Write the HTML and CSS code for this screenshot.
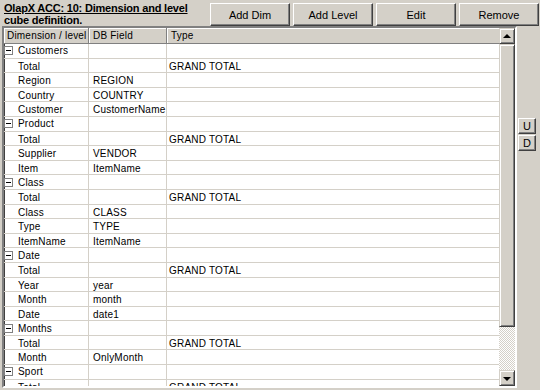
FILE: index.html
```html
<!DOCTYPE html>
<html>
<head>
<meta charset="utf-8">
<link rel="stylesheet" href="styles.css">
</head>
<body>
<div class="app">
  <div class="topbar">
    <div class="title">
      <div class="title-line1">OlapX ACC: 10: Dimension and level</div>
      <div class="title-line2">cube definition.</div>
    </div>
    <div class="buttons">
      <button class="btn">Add Dim</button>
      <button class="btn">Add Level</button>
      <button class="btn">Edit</button>
      <button class="btn">Remove</button>
    </div>
  </div>
  <div class="main">
    <div class="grid">
      <div class="table">
        <div class="row head">
          <div class="hc">Dimension / level</div>
          <div class="hc">DB Field</div>
          <div class="hc">Type</div>
        </div>
        <div class="row"><div class="c c1 grp"><span class="exp"></span>Customers</div><div class="c c2"></div><div class="c c3"></div></div>
        <div class="row"><div class="c c1">Total</div><div class="c c2"></div><div class="c c3">GRAND TOTAL</div></div>
        <div class="row"><div class="c c1">Region</div><div class="c c2">REGION</div><div class="c c3"></div></div>
        <div class="row"><div class="c c1">Country</div><div class="c c2">COUNTRY</div><div class="c c3"></div></div>
        <div class="row"><div class="c c1">Customer</div><div class="c c2">CustomerName</div><div class="c c3"></div></div>
        <div class="row"><div class="c c1 grp"><span class="exp"></span>Product</div><div class="c c2"></div><div class="c c3"></div></div>
        <div class="row"><div class="c c1">Total</div><div class="c c2"></div><div class="c c3">GRAND TOTAL</div></div>
        <div class="row"><div class="c c1">Supplier</div><div class="c c2">VENDOR</div><div class="c c3"></div></div>
        <div class="row"><div class="c c1">Item</div><div class="c c2">ItemName</div><div class="c c3"></div></div>
        <div class="row"><div class="c c1 grp"><span class="exp"></span>Class</div><div class="c c2"></div><div class="c c3"></div></div>
        <div class="row"><div class="c c1">Total</div><div class="c c2"></div><div class="c c3">GRAND TOTAL</div></div>
        <div class="row"><div class="c c1">Class</div><div class="c c2">CLASS</div><div class="c c3"></div></div>
        <div class="row"><div class="c c1">Type</div><div class="c c2">TYPE</div><div class="c c3"></div></div>
        <div class="row"><div class="c c1">ItemName</div><div class="c c2">ItemName</div><div class="c c3"></div></div>
        <div class="row"><div class="c c1 grp"><span class="exp"></span>Date</div><div class="c c2"></div><div class="c c3"></div></div>
        <div class="row"><div class="c c1">Total</div><div class="c c2"></div><div class="c c3">GRAND TOTAL</div></div>
        <div class="row"><div class="c c1">Year</div><div class="c c2">year</div><div class="c c3"></div></div>
        <div class="row"><div class="c c1">Month</div><div class="c c2">month</div><div class="c c3"></div></div>
        <div class="row"><div class="c c1">Date</div><div class="c c2">date1</div><div class="c c3"></div></div>
        <div class="row"><div class="c c1 grp"><span class="exp"></span>Months</div><div class="c c2"></div><div class="c c3"></div></div>
        <div class="row"><div class="c c1">Total</div><div class="c c2"></div><div class="c c3">GRAND TOTAL</div></div>
        <div class="row"><div class="c c1">Month</div><div class="c c2">OnlyMonth</div><div class="c c3"></div></div>
        <div class="row"><div class="c c1 grp"><span class="exp"></span>Sport</div><div class="c c2"></div><div class="c c3"></div></div>
        <div class="row"><div class="c c1">Total</div><div class="c c2"></div><div class="c c3">GRAND TOTAL</div></div>
      </div>
      <div class="scrollbar">
        <div class="sb-btn"><span class="arrow-up"></span></div>
        <div class="sb-thumb"></div>
        <div class="sb-track"></div>
        <div class="sb-btn"><span class="arrow-down"></span></div>
      </div>
    </div>
    <div class="side">
      <button class="small-btn">U</button>
      <button class="small-btn">D</button>
    </div>
  </div>
</div>
</body>
</html>
```

FILE: styles.css
```css
html, body {
  margin: 0;
  padding: 0;
}
body {
  background: #d4d0c8;
  font-family: "Liberation Sans", Arial, sans-serif;
  font-size: 11px;
  color: #000;
  width: 540px;
  height: 390px;
  overflow: hidden;
}
.app {
  display: flex;
  flex-direction: column;
}
.topbar {
  display: flex;
  height: 26px;
}
.title {
  padding: 2px 0 0 4px;
  font-weight: bold;
  line-height: 12px;
  letter-spacing: -0.2px;
}
.title-line1 {
  text-decoration: underline;
}
.buttons {
  margin-left: auto;
  display: flex;
  gap: 3px;
  padding: 3px 1px 0 0;
}
.btn {
  width: 80px;
  height: 23px;
  margin: 0;
  padding: 0;
  font-family: "Liberation Sans", Arial, sans-serif;
  font-size: 11px;
  color: #000;
  background: #d4d0c8;
  border: 1px solid;
  border-color: #ffffff #404040 #404040 #ffffff;
  box-shadow: inset -1px -1px 0 #808080;
}
.main {
  display: flex;
}
.grid {
  margin-left: 2px;
  width: 511px;
  height: 358px;
  border: 2px solid;
  border-color: #808080 #ffffff #ffffff #808080;
  box-shadow: inset 1px 1px 0 #404040;
  display: flex;
  background: #fff;
}
.table {
  flex: 1;
  overflow: hidden;
  padding: 0;
  font-size: 10px;
  letter-spacing: 0.2px;
}
.row {
  display: grid;
  grid-template-columns: 85px 78px 1fr;
  height: 14.6px;
}
.row.head {
  height: 16px;
  background: #d4d0c8;
}
.hc {
  box-sizing: border-box;
  padding: 2px 0 0 3px;
  line-height: 12px;
  border-right: 1px solid #808080;
  border-bottom: 1px solid #808080;
  box-shadow: inset 1px 1px 0 #ffffff;
  white-space: nowrap;
  overflow: hidden;
}
.hc:nth-child(2) { padding-left: 4px; }
.hc:nth-child(3) { padding-left: 4px; border-right: none; }
.c {
  box-sizing: border-box;
  border-right: 1px solid #d4d0c8;
  border-bottom: 1px solid #d4d0c8;
  white-space: nowrap;
  overflow: hidden;
  line-height: 13px;
  padding-top: 1px;
}
.c1 { padding-left: 14px; }
.c1.grp { padding-left: 0; display: flex; align-items: center; padding-top: 0; }
.c2 { padding-left: 4px; }
.c3 { padding-left: 2px; border-right: none; }
.exp {
  box-sizing: border-box;
  width: 9px;
  height: 9px;
  border: 1px solid #808080;
  background: #fff;
  margin-right: 5px;
  position: relative;
  flex: none;
}
.exp::after {
  content: "";
  position: absolute;
  left: 1px;
  top: 3px;
  width: 5px;
  height: 1px;
  background: #000;
}
.scrollbar {
  width: 16px;
  display: flex;
  flex-direction: column;
  background: #d4d0c8;
}
.sb-btn {
  box-sizing: border-box;
  height: 16px;
  border: 1px solid;
  border-color: #d4d0c8 #404040 #404040 #d4d0c8;
  box-shadow: inset 1px 1px 0 #ffffff, inset -1px -1px 0 #808080;
  display: flex;
  align-items: center;
  justify-content: center;
  background: #d4d0c8;
}
.arrow-up, .arrow-down {
  width: 0;
  height: 0;
  border-left: 4px solid transparent;
  border-right: 4px solid transparent;
}
.arrow-up { border-bottom: 4px solid #000; margin-top: -1px; }
.arrow-down { border-top: 4px solid #000; margin-top: 1px; }
.sb-thumb {
  box-sizing: border-box;
  height: 283px;
  border: 1px solid;
  border-color: #d4d0c8 #404040 #404040 #d4d0c8;
  box-shadow: inset 1px 1px 0 #ffffff, inset -1px -1px 0 #808080;
  background: #d4d0c8;
}
.sb-track {
  flex: 1;
  background: repeating-conic-gradient(#ffffff 0 25%, #d4d0c8 0 50%) 0 0 / 2px 2px;
}
.side {
  display: flex;
  flex-direction: column;
  gap: 1px;
  padding: 92px 0 0 1px;
}
.small-btn {
  width: 18px;
  height: 16px;
  margin: 0;
  padding: 0;
  font-family: "Liberation Sans", Arial, sans-serif;
  font-size: 11px;
  color: #000;
  background: #d4d0c8;
  border: 1px solid;
  border-color: #ffffff #404040 #404040 #ffffff;
  box-shadow: inset -1px -1px 0 #808080;
}
```
